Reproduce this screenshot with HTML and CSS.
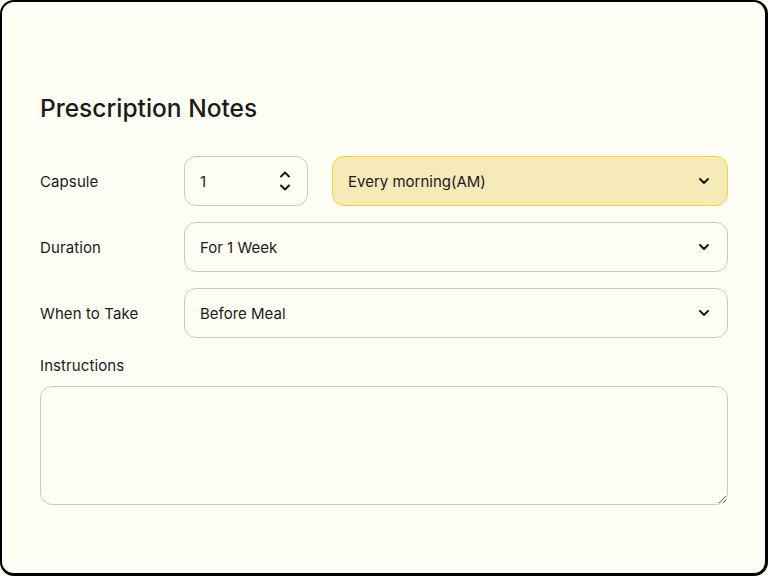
FILE: index.html
```html
<!DOCTYPE html>
<html lang="en">
<head>
    <meta charset="UTF-8">
    <meta name="viewport" content="width=device-width, initial-scale=1.0">
    <title>Prescription Notes</title>
    <link rel="stylesheet" href="styles.css">
</head>
<body>
    <div class="card">
        <h2>Prescription Notes</h2>

        <div class="notes-form">
            <div class="form-row">
                <label>Capsule</label>
                <div class="field number-field">
                    <span class="value">1</span>
                    <svg class="spin" width="14" height="28" viewBox="0 0 14 28">
                        <path d="M3 9.5 L7 5.5 L11 9.5" fill="none" stroke="#1a1a1a" stroke-width="2" stroke-linecap="round" stroke-linejoin="round"/>
                        <path d="M3 18.5 L7 22.5 L11 18.5" fill="none" stroke="#1a1a1a" stroke-width="2" stroke-linecap="round" stroke-linejoin="round"/>
                    </svg>
                </div>
                <div class="field select-field highlight">
                    <span class="value">Every morning(AM)</span>
                    <svg class="chevron" width="14" height="14" viewBox="0 0 14 14">
                        <path d="M3 5 L7 9 L11 5" fill="none" stroke="#1a1a1a" stroke-width="2" stroke-linecap="round" stroke-linejoin="round"/>
                    </svg>
                </div>
            </div>

            <div class="form-row">
                <label>Duration</label>
                <div class="field select-field">
                    <span class="value">For 1 Week</span>
                    <svg class="chevron" width="14" height="14" viewBox="0 0 14 14">
                        <path d="M3 5 L7 9 L11 5" fill="none" stroke="#1a1a1a" stroke-width="2" stroke-linecap="round" stroke-linejoin="round"/>
                    </svg>
                </div>
            </div>

            <div class="form-row">
                <label>When to Take</label>
                <div class="field select-field">
                    <span class="value">Before Meal</span>
                    <svg class="chevron" width="14" height="14" viewBox="0 0 14 14">
                        <path d="M3 5 L7 9 L11 5" fill="none" stroke="#1a1a1a" stroke-width="2" stroke-linecap="round" stroke-linejoin="round"/>
                    </svg>
                </div>
            </div>

            <div class="form-group">
                <label for="instructions">Instructions</label>
                <textarea id="instructions"></textarea>
            </div>
        </div>
    </div>
</body>
</html>
```

FILE: styles.css
```css
* {
    box-sizing: border-box;
}
body {
    margin: 0;
    font-family: Inter, 'Noto Sans', sans-serif;
    color: #1a1a1a;
    background: #fffef5;
}
.card {
    width: 768px;
    height: 576px;
    background: #fffef5;
    border: 2px solid #000;
    border-right-width: 3px;
    border-bottom-width: 3px;
    border-radius: 14px;
    padding: 0 37px 0 38px;
}
h2 {
    margin: 92px 0 34px;
    font-size: 24.5px;
    line-height: 28px;
    font-weight: 500;
    letter-spacing: 0;
}
.notes-form {
    display: flex;
    flex-direction: column;
    gap: 16px;
}
.form-row {
    display: flex;
    align-items: center;
    height: 50px;
}
.form-row label {
    width: 144px;
    flex-shrink: 0;
    font-size: 15px;
    letter-spacing: 0.1px;
}
.field {
    height: 50px;
    border: 1px solid #c9c9c4;
    border-radius: 12px;
    display: flex;
    align-items: center;
    justify-content: space-between;
    padding: 0 16px 0 15px;
    font-size: 15px;
}
.number-field {
    width: 124px;
    margin-right: 24px;
    padding-right: 15px;
}
.select-field {
    flex: 1;
    padding-right: 16px;
}
.highlight {
    background: #f7eab9;
    border-color: #f2d53c;
}
.form-group {
    display: flex;
    flex-direction: column;
    gap: 10px;
    margin-top: 2px;
}
.form-group label {
    font-size: 15px;
    line-height: 20px;
    letter-spacing: 0.1px;
}
textarea {
    height: 119px;
    border: 1px solid #c9c9c4;
    border-radius: 12px;
    background: transparent;
    resize: vertical;
    font-family: inherit;
}
```
